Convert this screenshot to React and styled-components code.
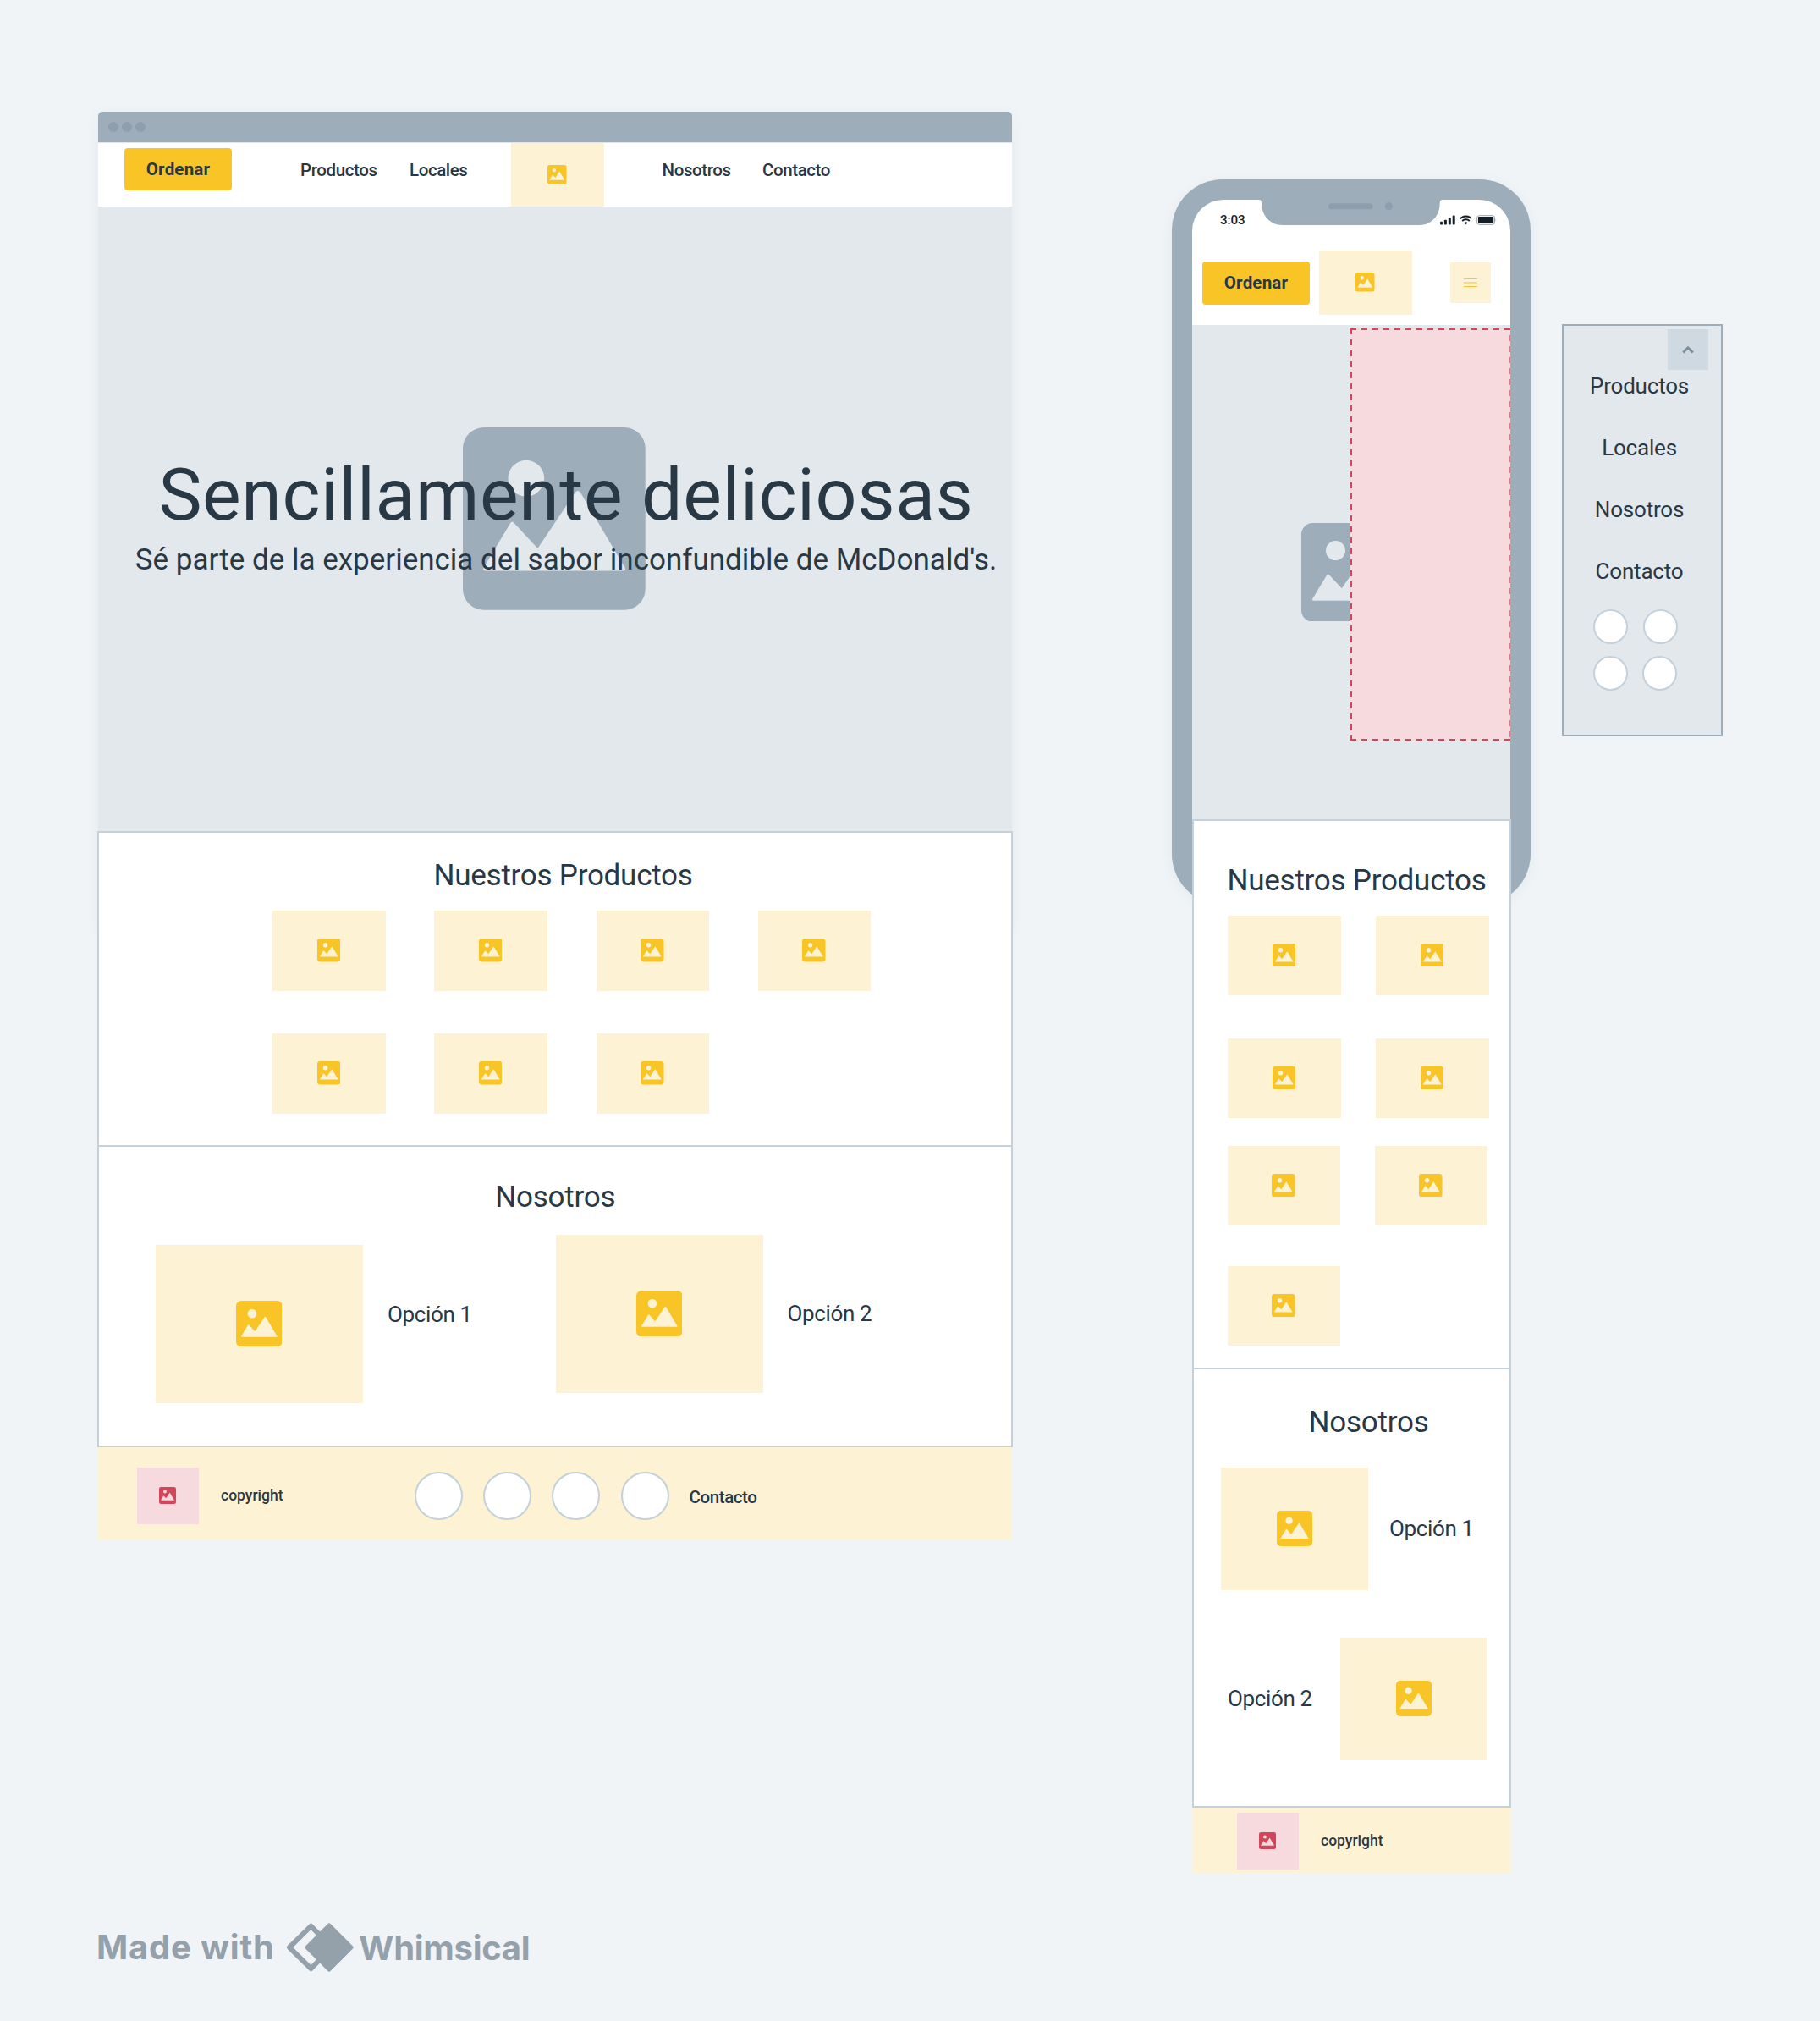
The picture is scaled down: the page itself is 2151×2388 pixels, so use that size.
import React from "react";
import styled, { createGlobalStyle } from "styled-components";

const color = {
  canvas: "#f0f4f7",
  slate: "#9dadba",
  slateDark: "#8e9eac",
  mist: "#e2e8ec",
  line: "#c4d0da",
  ink: "#283845",
  amber: "#f8c426",
  cream: "#fdf2d3",
  rose: "#f6dade",
  red: "#d3455b",
};

const GlobalStyle = createGlobalStyle`
  *, *::before, *::after { box-sizing: border-box; }
  body { margin: 0; background: ${color.canvas}; }
`;

const Canvas = styled.main`
  width: 2151px;
  height: 2388px;
  padding: 132px 0 0 116px;
  background: ${color.canvas};
  color: ${color.ink};
  font-family: Roboto, "Liberation Sans", sans-serif;
  overflow: hidden;
`;

const Boards = styled.div`
  display: flex;
  align-items: flex-start;
  height: 2132px;
`;

/* Shared parts */

const Text = styled.span`
  display: block;
  white-space: nowrap;
  font-size: ${(p) => p.$size}px;
  line-height: ${(p) => p.$line || Math.round(p.$size * 1.2)}px;
  letter-spacing: ${(p) => p.$track || 0}px;
  font-weight: ${(p) => p.$weight || 400};
`;

const NavText = styled(Text).attrs({ $size: 20.5, $track: -0.4, $weight: 500 })``;
const OptionText = styled(Text).attrs({ $size: 26, $track: -0.35 })``;
const SmallText = styled(Text).attrs({ $size: 17.5, $track: 0, $weight: 500 })``;

const SectionTitle = styled.h2`
  margin: 0 0 ${(p) => p.$after}px ${(p) => p.$indent}px;
  font-size: 35px;
  font-weight: 400;
  line-height: 42px;
  letter-spacing: -0.25px;
  white-space: nowrap;
`;

const OrderButton = styled.button`
  width: 127px;
  height: ${(p) => p.$height || 50}px;
  padding: 0;
  border: 0;
  border-radius: 4px;
  background: ${color.amber};
  color: ${color.ink};
  font: 700 20.5px/24px Roboto, "Liberation Sans", sans-serif;
  letter-spacing: 0.2px;
`;

const Placeholder = styled.div`
  display: flex;
  align-items: center;
  justify-content: center;
  flex: none;
  width: ${(p) => p.$w}px;
  height: ${(p) => p.$h}px;
  background: ${(p) => p.$bg || color.cream};
  color: ${(p) => p.$fg || color.amber};
  svg { display: block; margin: 0 1px 1px 0; }
`;

const Disc = styled.span`
  display: block;
  width: ${(p) => p.$size}px;
  height: ${(p) => p.$size}px;
  border: 2px solid ${color.line};
  border-radius: 50%;
  background: #fff;
`;

function PictureIcon({ size }) {
  return (
    <svg width={size} height={size} viewBox="0 0 100 100">
      <path
        fill="currentColor"
        fillRule="evenodd"
        d="M11.5 0H88.5A11.5 11.5 0 0 1 100 11.5V88.5A11.5 11.5 0 0 1 88.500 100H11.500A11.500 11.500 0 0 1 0 88.500V11.500A11.500 11.500 0 0 1 11.500 0Z
           M34.700 18A9.900 9.900 0 1 0 34.700 37.800A9.900 9.900 0 1 0 34.700 18Z
           M11.400 76.800L26 52.500Q27 51 28.200 52.500L41 66.300L61.700 35.500Q63 34 64.300 35.500L88.800 76.800Q89.500 78.600 88 78.600H12.200Q10.700 78.600 11.400 76.800Z"
      />
    </svg>
  );
}

function Picture({ w, h, icon, bg, fg }) {
  return (
    <Placeholder $w={w} $h={h} $bg={bg} $fg={fg}>
      <PictureIcon size={icon} />
    </Placeholder>
  );
}

const RosePicture = () => (
  <Picture w={73} h={67} icon={20} bg={color.rose} fg={color.red} />
);

/* Desktop wireframe */

const BrowserWindow = styled.section`
  flex: none;
  width: 1080px;
  height: 965px;
  border-radius: 6px 6px 0 0;
  box-shadow: 0 3px 14px rgba(90, 110, 130, 0.08);
`;

const TitleBar = styled.div`
  display: flex;
  align-items: center;
  gap: 4px;
  height: 36px;
  padding-left: 12px;
  border-radius: 5px 5px 0 0;
  background: ${color.slate};
`;

const WindowDot = styled.i`
  width: 12px;
  height: 12px;
  border-radius: 50%;
  background: ${color.slateDark};
`;

const NavBar = styled.nav`
  display: grid;
  grid-template-columns: 208px 129px 120px 178.500px 118.500px auto;
  height: 76px;
  padding-left: 31px;
  border-top: 1px solid #dfe5e9;
  background: #fff;
`;

const NavCell = styled.div`
  padding-top: ${(p) => p.$top}px;
`;

const Hero = styled.div`
  display: grid;
  place-items: center;
  height: 738px;
  background: ${color.mist};
  > * { grid-area: 1 / 1; }
`;

const HeroIcon = styled.div`
  color: ${color.slate};
  svg { display: block; }
  margin-left: ${(p) => p.$left || 0}px;
`;

const HeroCopy = styled.div`
  display: flex;
  flex-direction: column;
  align-items: center;
  padding: 0 0 3px 26px;
`;

const HeroTitle = styled.h1`
  margin: 0;
  font-size: 86px;
  font-weight: 400;
  line-height: 100px;
  letter-spacing: 0.6px;
  white-space: nowrap;
`;

const DesktopSection = styled.section`
  width: 1082px;
  height: ${(p) => p.$h}px;
  margin-left: -1px;
  margin-top: ${(p) => (p.$joined ? -2 : 0)}px;
  padding-top: ${(p) => p.$top}px;
  border: 2px solid ${color.line};
  border-bottom-width: ${(p) => (p.$joined ? 1 : 2)}px;
  background: #fff;
`;

const DesktopGrid = styled.div`
  display: grid;
  grid-template-columns: repeat(4, 133.500px);
  grid-auto-rows: 94.500px;
  gap: 50.500px 57.700px;
  margin-left: 205.300px;
`;

const OptionRow = styled.div`
  display: flex;
  align-items: flex-start;
  padding-left: 67px;
`;

const Option = styled.div`
  display: flex;
  align-items: center;
  gap: ${(p) => p.$gap}px;
  width: ${(p) => (p.$width ? p.$width + "px" : "auto")};
  margin-top: ${(p) => p.$drop || 0}px;
  margin-left: ${(p) => p.$indent || 0}px;
  ${OptionText} { padding-bottom: ${(p) => p.$lift || 0}px; }
`;

const DesktopFooter = styled.footer`
  display: grid;
  grid-template-columns: 99px 229px 324.500px auto;
  align-items: center;
  height: 109px;
  padding: 6px 0 0 46px;
  background: ${color.cream};
`;

const DiscRow = styled.div`
  display: flex;
  gap: 24.200px;
`;

const FooterLink = styled(NavText)`
  padding-top: 3px;
`;

function Desktop() {
  return (
    <BrowserWindow>
      <TitleBar>
        <WindowDot />
        <WindowDot />
        <WindowDot />
      </TitleBar>
      <NavBar>
        <NavCell $top={6}>
          <OrderButton>Ordenar</OrderButton>
        </NavCell>
        <NavCell $top={19.5}><NavText>Productos</NavText></NavCell>
        <NavCell $top={19.5}><NavText>Locales</NavText></NavCell>
        <NavCell $top={0}><Picture w={110} h={75} icon={22.500} /></NavCell>
        <NavCell $top={19.5}><NavText>Nosotros</NavText></NavCell>
        <NavCell $top={19.5}><NavText>Contacto</NavText></NavCell>
      </NavBar>
      <Hero>
        <HeroIcon $left={-2}><PictureIcon size={215.700} /></HeroIcon>
        <HeroCopy>
          <HeroTitle>Sencillamente deliciosas</HeroTitle>
          <Text $size={35} $line={54}>
            Sé parte de la experiencia del sabor inconfundible de McDonald's.
          </Text>
        </HeroCopy>
      </Hero>
      <DesktopSection $h={373} $top={30}>
        <SectionTitle $indent={395.500} $after={20}>Nuestros Productos</SectionTitle>
        <DesktopGrid>
          {Array.from({ length: 7 }, (_, i) => (
            <Picture key={i} w={133.500} h={94.500} icon={27.500} />
          ))}
        </DesktopGrid>
      </DesktopSection>
      <DesktopSection $h={357} $top={39} $joined>
        <SectionTitle $indent={468.300} $after={23}>Nosotros</SectionTitle>
        <OptionRow>
          <Option $gap={29} $width={473} $drop={12} $lift={23}>
            <Picture w={245} h={187} icon={54.500} />
            <OptionText>Opción 1</OptionText>
          </Option>
          <Option $gap={28.500}>
            <Picture w={245} h={187} icon={54.500} />
            <OptionText>Opción 2</OptionText>
          </Option>
        </OptionRow>
      </DesktopSection>
      <DesktopFooter>
        <RosePicture />
        <SmallText>copyright</SmallText>
        <DiscRow>
          {[0, 1, 2, 3].map((i) => <Disc key={i} $size={57} />)}
        </DiscRow>
        <FooterLink>Contacto</FooterLink>
      </DesktopFooter>
    </BrowserWindow>
  );
}

/* Phone wireframe */

const PhoneFrame = styled.section`
  position: relative;
  flex: none;
  width: 424px;
  height: 857px;
  margin: 80px 0 0 189px;
  padding: 24px;
  border-radius: 60px;
  background: ${color.slate};
  box-shadow: 0 3px 14px rgba(90, 110, 130, 0.08);
`;

const Notch = styled.svg`
  position: absolute;
  left: 101px;
  top: 23px;
`;

const PhoneTop = styled.div`
  height: 148px;
  border-radius: 37px 37px 0 0;
  background: #fff;
`;

const StatusBar = styled.div`
  display: flex;
  align-items: center;
  height: 60px;
  padding: 0 16px 13px 33px;
`;

const StatusIcons = styled.div`
  display: flex;
  align-items: center;
  gap: 5px;
  margin-left: auto;
  svg { display: block; }
`;

const Clock = styled(Text)`
  color: #17222b;
  padding-top: 1px;
`;

const PhoneNav = styled.div`
  display: flex;
  align-items: center;
  height: 76px;
  padding-left: 12px;
  gap: 11px;
`;

const MenuButton = styled(Placeholder)`
  margin-left: 34px;
`;

const PhoneHero = styled.div`
  position: relative;
  display: grid;
  place-items: center;
  height: 584px;
  background: ${color.mist};
`;

const MenuZone = styled.div`
  position: absolute;
  left: 187px;
  top: 4px;
  width: 189px;
  height: 487px;
  background:
    repeating-linear-gradient(90deg, ${color.red} 0 7px, transparent 7px 13px) 0 0 / 100% 2px no-repeat,
    repeating-linear-gradient(90deg, ${color.red} 0 7px, transparent 7px 13px) 0 100% / 100% 2px no-repeat,
    repeating-linear-gradient(180deg, ${color.red} 0 7px, transparent 7px 13px) 0 0 / 2px 100% no-repeat,
    repeating-linear-gradient(180deg, #d97a8b 0 7px, transparent 7px 13px) 100% 8px / 1px 100% no-repeat,
    ${color.rose};
`;

const PhoneSection = styled.section`
  position: relative;
  width: 377px;
  height: ${(p) => p.$h}px;
  margin-top: ${(p) => (p.$joined ? -2 : 0)}px;
  padding-top: ${(p) => p.$top}px;
  border: 2px solid ${color.line};
  background: #fff;
`;

const PhoneGrid = styled.div`
  display: grid;
  grid-template-columns: repeat(2, ${(p) => p.$w}px);
  grid-auto-rows: 94px;
  gap: ${(p) => p.$gap}px 41px;
  margin: 0 0 33px 40px;
`;

const PhoneFooter = styled.footer`
  display: flex;
  align-items: center;
  gap: 26px;
  width: 375px;
  height: 78px;
  margin-left: 1px;
  padding-left: 52px;
  background: ${color.cream};
`;

function Phone() {
  return (
    <PhoneFrame>
      <PhoneTop>
        <StatusBar>
          <Clock $size={15.200} $weight={500} $track={-0.100}>3:03</Clock>
          <StatusIcons>
            <svg width="18" height="12" viewBox="0 0 18 12" fill="#131e27">
              <rect x="0" y="7.700" width="3" height="3.700" rx=".9" />
              <rect x="4.900" y="5.700" width="3" height="5.700" rx=".9" />
              <rect x="9.800" y="3.200" width="3" height="8.200" rx=".9" />
              <rect x="14.700" y=".6" width="3" height="10.800" rx=".9" />
            </svg>
            <svg width="15" height="12" viewBox="0 0 15 12" fill="none" stroke="#131e27" strokeWidth="1.900">
              <path d="M.8 4.200A9.600 9.600 0 0 1 14.200 4.200" />
              <path d="M3.200 7A6.200 6.200 0 0 1 11.800 7" />
              <path d="M5.400 9.200A3.200 3.200 0 0 1 9.600 9.200L7.500 11.200Z" fill="#131e27" stroke="none" />
            </svg>
            <svg width="24" height="12" viewBox="0 0 24 12">
              <rect x=".7" y=".7" width="20.800" height="10.600" rx="2.600" fill="none" stroke="#9ba1a6" strokeWidth="1" />
              <rect x="2" y="2.100" width="18.200" height="7.800" rx="1" fill="#131e27" />
              <path d="M22.600 4.200Q24 6 22.600 7.800Z" fill="#9ba1a6" />
            </svg>
          </StatusIcons>
        </StatusBar>
        <PhoneNav>
          <OrderButton $height={51}>Ordenar</OrderButton>
          <Picture w={110} h={76} icon={22.500} />
          <MenuButton $w={48} $h={48}>
            <svg width="16" height="12" viewBox="0 0 16 12" stroke="currentColor" strokeWidth="1.200">
              <path d="M0 1.500H16M0 6H16M0 10.500H16" />
            </svg>
          </MenuButton>
        </PhoneNav>
      </PhoneTop>
      <Notch width="222" height="31" viewBox="0 0 222 31">
        <path
          fill={color.slate}
          d="M0 0H222V1H219Q215.700 1 215.700 5C215.700 20 205.700 31 191 31H30C15.300 31 5 20 5 5Q5 1 1.700 1H0Z"
        />
        <rect x="84" y="5.300" width="52.700" height="7" rx="3.500" fill={color.slateDark} />
        <circle cx="155.300" cy="8.500" r="4.600" fill={color.slateDark} />
      </Notch>
      <PhoneHero>
        <HeroIcon $left={-1}><PictureIcon size={116.700} /></HeroIcon>
        <MenuZone />
      </PhoneHero>
      <PhoneSection $h={650} $top={50}>
        <SectionTitle $indent={39.500} $after={20}>Nuestros Productos</SectionTitle>
        <PhoneGrid $w={134} $gap={51}>
          {[0, 1, 2, 3].map((i) => <Picture key={i} w={134} h={94} icon={27.500} />)}
        </PhoneGrid>
        <PhoneGrid $w={133} $gap={48}>
          {[0, 1, 2].map((i) => <Picture key={i} w={133} h={94} icon={27.500} />)}
        </PhoneGrid>
      </PhoneSection>
      <PhoneSection $h={520} $top={42} $joined>
        <SectionTitle $indent={135.500} $after={32}>Nosotros</SectionTitle>
        <Option $gap={25} $indent={32}>
          <Picture w={174} h={145} icon={42} />
          <OptionText>Opción 1</OptionText>
        </Option>
        <Option $gap={33.500} $indent={40} $drop={56}>
          <OptionText>Opción 2</OptionText>
          <Picture w={174} h={145} icon={42} />
        </Option>
      </PhoneSection>
      <PhoneFooter>
        <RosePicture />
        <SmallText>copyright</SmallText>
      </PhoneFooter>
    </PhoneFrame>
  );
}

/* Expanded mobile menu */

const MenuPanel = styled.aside`
  flex: none;
  width: 190px;
  height: 487px;
  margin: 251px 0 0 37px;
  padding: 4px 7px 0 0;
  border: 2px solid ${color.slate};
  background: ${color.mist};
`;

const CollapseButton = styled(Placeholder)`
  margin-left: 123px;
`;

const MenuList = styled.div`
  display: flex;
  flex-direction: column;
  align-items: center;
  gap: 36px;
  padding-top: 1px;
`;

const DiscGrid = styled.div`
  display: grid;
  grid-template-columns: 41px 41px;
  gap: 14px 18px;
  margin: 26px 0 0 35px;
  > :last-child { margin-left: -1px; }
`;

function Menu() {
  return (
    <MenuPanel>
      <CollapseButton $w={48} $h={48} $bg="#ced9e2" $fg="#7f8e9b">
        <svg width="14" height="10" viewBox="0 0 14 10" fill="none" stroke="currentColor" strokeWidth="3">
          <path d="M1.300 8.500L7 2.800L12.700 8.500" />
        </svg>
      </CollapseButton>
      <MenuList>
        {["Productos", "Locales", "Nosotros", "Contacto"].map((label) => (
          <Text key={label} $size={26} $line={37} $track={-0.2}>{label}</Text>
        ))}
      </MenuList>
      <DiscGrid>
        {[0, 1, 2, 3].map((i) => <Disc key={i} $size={41} />)}
      </DiscGrid>
    </MenuPanel>
  );
}

/* Attribution */

const Attribution = styled.footer`
  display: grid;
  grid-template-columns: 224px 86px auto;
  align-items: center;
  height: 74px;
  margin-left: -2px;
  color: #94a1ab;
`;

const Brand = styled.span`
  font-family: Inter, "Liberation Sans", sans-serif;
  font-weight: 700;
  font-size: 40px;
  line-height: 48px;
  letter-spacing: ${(p) => p.$track}px;
  padding-top: ${(p) => p.$top || 0}px;
  white-space: nowrap;
`;

function BrandMark() {
  return (
    <svg width="80" height="58" viewBox="0 0 80 58" strokeLinejoin="round" stroke="currentColor">
      <path d="M29.500 3.800L4 29L29.500 54.200L54 29Z" fill="none" strokeWidth="6" />
      <path d="M51 3L25 29L51 55L77 29Z" fill="currentColor" strokeWidth="5" />
    </svg>
  );
}

export default function App() {
  return (
    <>
      <GlobalStyle />
      <Canvas>
        <Boards>
          <Desktop />
          <Phone />
          <Menu />
        </Boards>
        <Attribution>
          <Brand $track={0.8}>Made with</Brand>
          <BrandMark />
          <Brand $track={-0.3} $top={2}>Whimsical</Brand>
        </Attribution>
      </Canvas>
    </>
  );
}
